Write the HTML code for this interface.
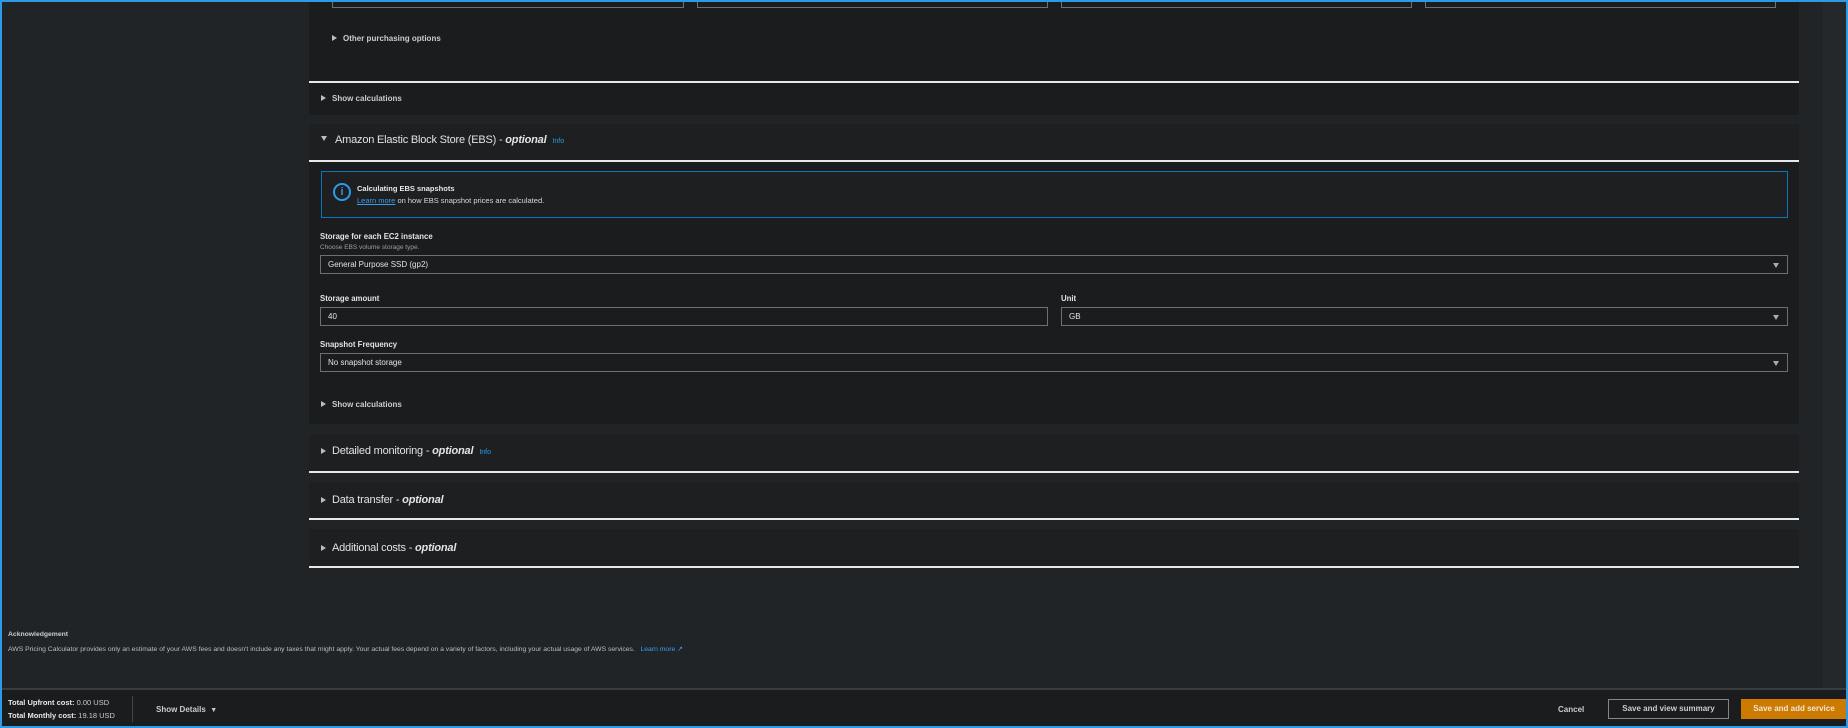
<!DOCTYPE html>
<html><head><meta charset="utf-8"><style>
*{margin:0;padding:0;box-sizing:border-box}
body{width:1848px;height:728px;overflow:hidden;background:#212426;font-family:"Liberation Sans",sans-serif;color:#d5dbdb;position:relative}
.a{position:absolute}
.frame{left:0;top:0;width:1848px;height:728px;border:2px solid #2b9be6;z-index:10;pointer-events:none}
.panel{background:#1b1c1e}
.box{border:1px solid #6b7075;background:#1b1c1e}
.line{height:2px;background:#e8e8e8;left:309px;width:1490px}
.sm{font-size:8px;font-weight:bold;color:#c8cdd0}
.hd{font-size:11px;color:#e0e4e6;letter-spacing:-0.2px}
.hd i{font-weight:bold}
.tri{display:inline-block;width:0;height:0;border-top:3.5px solid transparent;border-bottom:3.5px solid transparent;border-left:5px solid #b8bec2;margin-right:6px;vertical-align:0}
.trid{display:inline-block;width:0;height:0;border-left:3.5px solid transparent;border-right:3.5px solid transparent;border-top:5px solid #b8bec2;margin-right:8px;vertical-align:2px}
.dd{position:absolute;right:8px;top:50%;margin-top:-2px;border-left:3px solid transparent;border-right:3px solid transparent;border-top:5px solid #aaa}
.val{font-size:8px;color:#e0e4e6;padding-left:7px;line-height:17px}
.lbl{font-size:7.8px;color:#e0e4e6;font-weight:bold}
.info{font-size:7px;color:#2b9be6;margin-left:6px;font-weight:normal;letter-spacing:0}
</style></head><body>
<div class="a frame"></div>
<div class="a" style="left:1823px;top:0;width:25px;height:689px;background:#24282a"></div>
<div class="a panel" style="left:309px;top:0;width:1490px;height:82px"></div>
<div class="a" style="left:309px;top:0;width:1479px;height:59px;background:#1b1c1e"></div>
<div class="a box" style="left:332px;top:-2px;width:352px;height:10px"></div>
<div class="a box" style="left:697px;top:-2px;width:351px;height:10px"></div>
<div class="a box" style="left:1061px;top:-2px;width:351px;height:10px"></div>
<div class="a box" style="left:1425px;top:-2px;width:351px;height:10px"></div>
<div class="a sm" style="left:332px;top:34px"><span class="tri"></span>Other purchasing options</div>
<div class="a line" style="top:81px"></div>
<div class="a panel" style="left:309px;top:83px;width:1490px;height:32px"></div>
<div class="a sm" style="left:321px;top:94px"><span class="tri"></span>Show calculations</div>
<div class="a panel" style="left:309px;top:124px;width:1490px;height:300px;background:#1d1f21"></div>
<div class="a panel" style="left:309px;top:162px;width:1490px;height:262px"></div>
<div class="a hd" style="left:321px;top:134px"><span class="trid"></span>Amazon Elastic Block Store (EBS) - <i>optional</i><span class="info">Info</span></div>
<div class="a line" style="top:160px"></div>
<div class="a" style="left:321px;top:171px;width:1467px;height:47px;border:1px solid #0f73b8;background:#1d1f21"></div>
<div class="a" style="left:333px;top:183px;width:18px;height:18px;border:2px solid #2b9be6;border-radius:50%;color:#2b9be6;font-size:11px;font-weight:bold;text-align:center;line-height:14px">i</div>
<div class="a" style="left:357px;top:184px;font-size:7.5px;font-weight:bold;color:#e8e8e8">Calculating EBS snapshots</div>
<div class="a" style="left:357px;top:196px;font-size:7.5px;color:#d5dbdb"><span style="color:#3a9df0;text-decoration:underline">Learn more</span> on how EBS snapshot prices are calculated.</div>
<div class="a lbl" style="left:320px;top:232px">Storage for each EC2 instance</div>
<div class="a" style="left:320px;top:244px;font-size:6.5px;color:#95a0a5">Choose EBS volume storage type.</div>
<div class="a box" style="left:320px;top:255px;width:1468px;height:19px"><div class="val">General Purpose SSD (gp2)</div><div class="dd"></div></div>
<div class="a lbl" style="left:320px;top:294px">Storage amount</div>
<div class="a box" style="left:320px;top:307px;width:728px;height:19px"><div class="val">40</div></div>
<div class="a lbl" style="left:1061px;top:294px">Unit</div>
<div class="a box" style="left:1061px;top:307px;width:727px;height:19px"><div class="val">GB</div><div class="dd"></div></div>
<div class="a lbl" style="left:320px;top:340px">Snapshot Frequency</div>
<div class="a box" style="left:320px;top:353px;width:1468px;height:19px"><div class="val">No snapshot storage</div><div class="dd"></div></div>
<div class="a sm" style="left:321px;top:400px"><span class="tri"></span>Show calculations</div>
<div class="a panel" style="left:309px;top:435px;width:1490px;height:37px;background:#1d1f21"></div>
<div class="a hd" style="left:321px;top:445px"><span class="tri"></span>Detailed monitoring - <i>optional</i><span class="info">Info</span></div>
<div class="a line" style="top:471px"></div>
<div class="a panel" style="left:309px;top:482px;width:1490px;height:36px;background:#1d1f21"></div>
<div class="a hd" style="left:321px;top:494px"><span class="tri"></span>Data transfer - <i>optional</i></div>
<div class="a line" style="top:518px"></div>
<div class="a panel" style="left:309px;top:529px;width:1490px;height:38px;background:#1d1f21"></div>
<div class="a hd" style="left:321px;top:542px"><span class="tri"></span>Additional costs - <i>optional</i></div>
<div class="a line" style="top:566px"></div>
<div class="a" style="left:8px;top:631px;font-size:6.8px;font-weight:bold;color:#c8cdd0">Acknowledgement</div>
<div class="a" style="left:8px;top:645px;font-size:6.8px;color:#b8bec2">AWS Pricing Calculator provides only an estimate of your AWS fees and doesn't include any taxes that might apply. Your actual fees depend on a variety of factors, including your actual usage of AWS services. &nbsp; <span style="color:#3a9df0">Learn more &#x2197;</span></div>
<div class="a" style="left:0;top:688px;width:1848px;height:40px;background:#1b1c1e;border-top:2px solid #3a3d40"></div>
<div class="a" style="left:8px;top:698px;font-size:7.5px;color:#c8cdd0"><b style="color:#e8e8e8">Total Upfront cost:</b> 0.00 USD</div>
<div class="a" style="left:8px;top:711px;font-size:7.5px;color:#c8cdd0"><b style="color:#e8e8e8">Total Monthly cost:</b> 19.18 USD</div>
<div class="a" style="left:132px;top:696px;width:1px;height:26px;background:#444"></div>
<div class="a" style="left:156px;top:705px;font-size:8px;font-weight:bold;color:#c8cdd0">Show Details &nbsp;<span style="font-size:7px">&#9660;</span></div>
<div class="a" style="left:1558px;top:705px;font-size:8px;font-weight:bold;color:#c8cdd0">Cancel</div>
<div class="a" style="left:1608px;top:699px;width:121px;height:20px;border:1px solid #8a8480;font-size:8px;font-weight:bold;color:#c8cdd0;text-align:center;line-height:18px">Save and view summary</div>
<div class="a" style="left:1741px;top:699px;width:106px;height:20px;background:#cc7a00;font-size:8px;font-weight:bold;color:#f2e6d6;text-align:center;line-height:20px">Save and add service</div>
</body></html>
